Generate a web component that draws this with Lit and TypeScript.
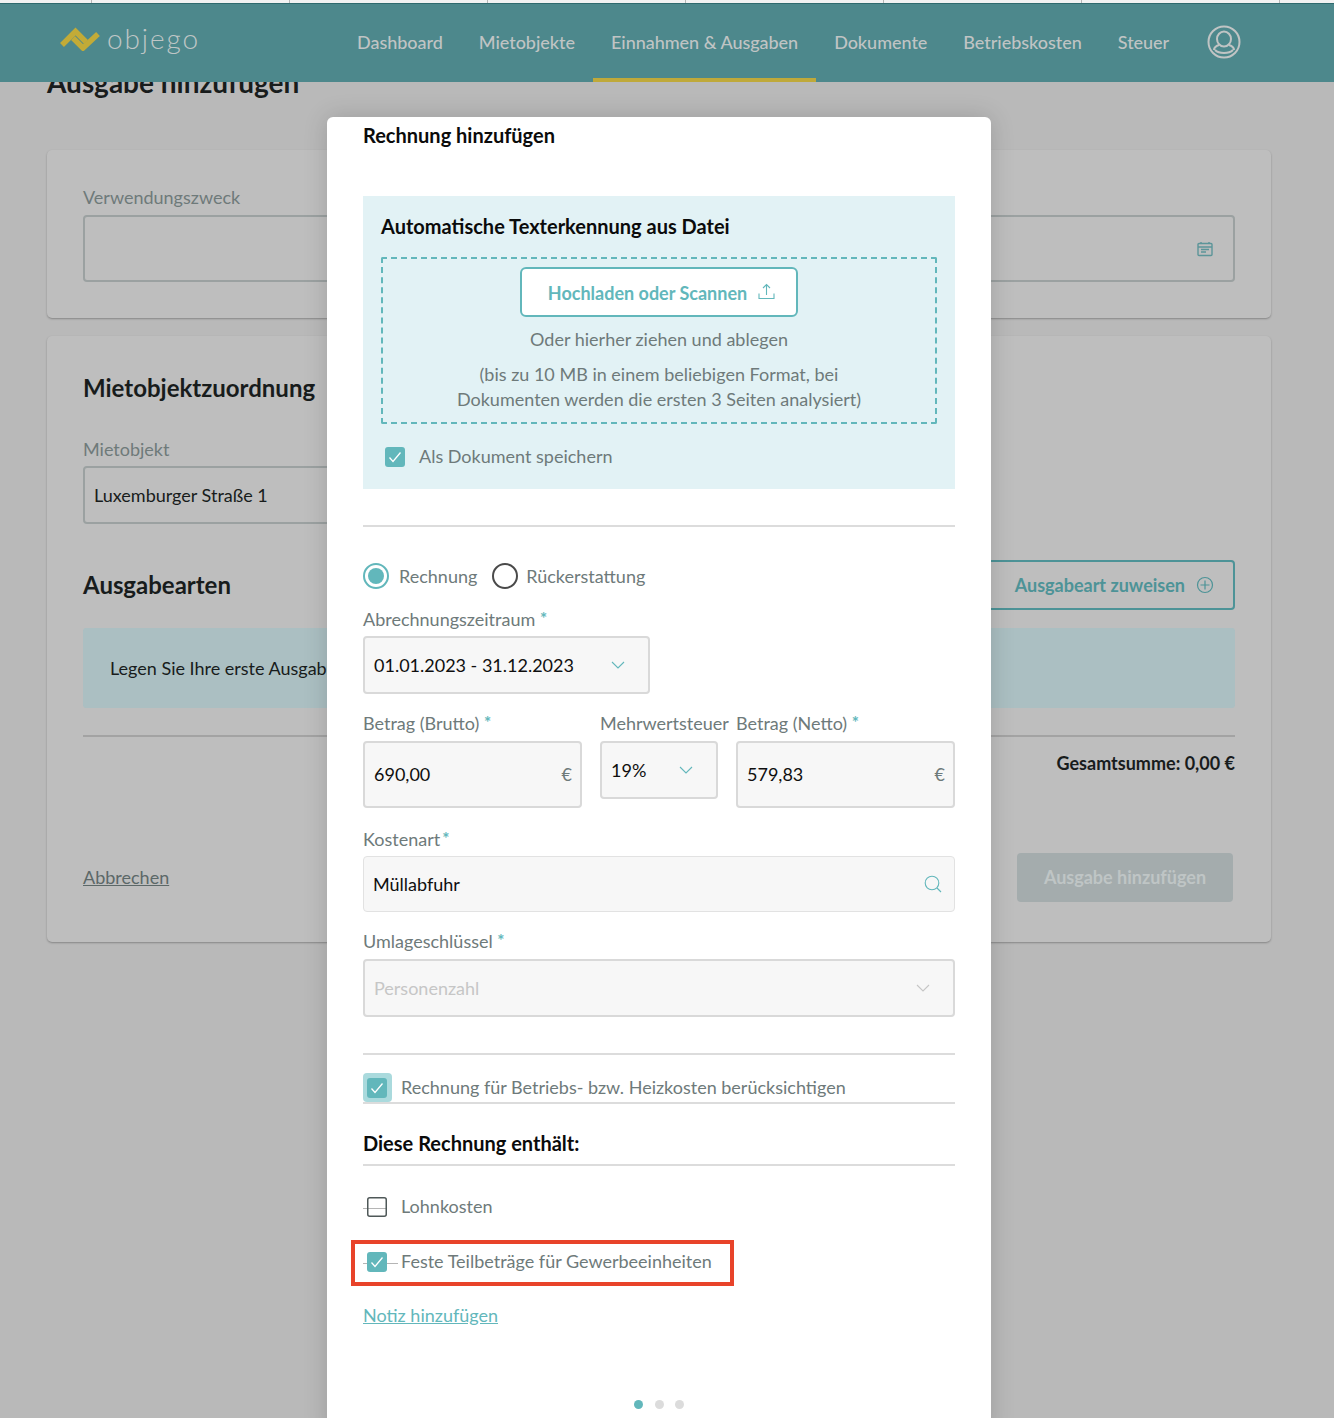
import { LitElement, html, css, svg } from "lit";
import { customElement } from "lit/decorators.js";

const chevron = (color = "#62b7bb") => html`<svg class="chev" width="14" height="8" viewBox="0 0 14 8" fill="none" stroke=${color} stroke-width="1.1"><path d="M1 1l6 6 6-6"/></svg>`;
const check = svg`<path d="M4.5 10.5l3.5 4L15.5 5.5" fill="none" stroke="#fff" stroke-width="1.3"/>`;

@customElement("app-root")
export class AppRoot extends LitElement {
  static styles = css`
    :host { display: block; position: relative; height: 1418px; overflow: hidden; background: #b9b9b9; font-family: Lato, "Liberation Sans", sans-serif; font-size: 18px; color: #6e7a7a; }
    * { box-sizing: border-box; }
    .strip { height: 3px; background: #f2f2f2; display: flex; }
    .strip i { width: 198px; border-right: 1px solid #b5b5b5; }
    .strip i:first-child { width: 92px; }
    header { position: relative; z-index: 2; height: 79px; background: #4d888c; border-top: 1px solid #2f6a6e; display: flex; align-items: stretch; }
    .logo { width: 339px; padding: 19px 0 0 60px; display: flex; gap: 7px; align-items: flex-start; }
    .logo span { font-weight: 300; font-size: 28px; line-height: 34px; letter-spacing: 1.9px; color: #bfc6c6; margin-top: -2px; }
    nav { display: flex; }
    nav a { padding: 0 18px; height: 78px; line-height: 76px; color: #c0c4c4; font-size: 18px; font-weight: 500; letter-spacing: -.03px; }
    nav a.on { border-bottom: 4px solid #bfa93a; }
    .avatar { margin: 21px 0 0 20px; }
    main { padding: 0 63px 0 47px; }
    h1 { margin: -23px 0 0; font-size: 28px; line-height: 46px; color: #181c1c; font-weight: 700; }
    .card { background: #bebebe; border-radius: 5px; box-shadow: 0 1px 2px rgba(0,0,0,.28); padding: 0 36px; }
    .c1 { margin-top: 45px; height: 168px; padding-top: 35px; display: grid; grid-template-columns: 1fr 1fr; gap: 40px; }
    .c2 { margin-top: 18px; height: 606px; padding-top: 36px; }
    .lbl { line-height: 24px; height: 24px; white-space: nowrap; }
    .bginput { margin-top: 6px; height: 67px; border: 2px solid #9ba1a1; border-radius: 4px; display: flex; justify-content: flex-end; align-items: center; padding-right: 20px; }
    h2 { margin: 0; font-size: 24px; line-height: 32px; color: #181c1c; font-weight: 700; }
    .bgsel { margin-top: 5px; width: 360px; height: 58px; border: 2px solid #9ba1a1; border-radius: 4px; padding-left: 9px; line-height: 54px; color: #181c1c; }
    .row { display: flex; justify-content: space-between; align-items: center; }
    .assign { width: 300px; height: 50px; border: 2px solid #4d9397; border-radius: 4px; color: #4d9397; font-weight: 700; display: flex; align-items: center; justify-content: flex-end; padding-right: 19px; gap: 11px; }
    .info { margin-top: 18px; height: 80px; background: #abbfc2; border-radius: 3px; padding-left: 27px; line-height: 81px; color: #181c1c; }
    .bghr { margin-top: 27px; height: 2px; background: #a3a3a3; }
    .sum { text-align: right; margin-top: 13px; line-height: 26px; color: #181c1c; font-weight: 700; }
    .bgbtm { margin-top: 77px; }
    .bgbtm u { color: #5c6868; margin-top: -2px; }
    .disabled { margin-right: 2px; width: 216px; height: 49px; padding-bottom: 2px; border-radius: 4px; background: #a4acad; color: #bfc5c5; font-weight: 700; display: flex; align-items: center; justify-content: center; }

    .modal { position: absolute; z-index: 3; left: 327px; top: 117px; width: 664px; height: 1320px; background: #fff; border-radius: 6px; padding: 0 36px; box-shadow: 0 0 24px rgba(0,0,0,.16); }
    .mtitle, .sub { font-weight: 700; font-size: 20px; color: #0b0b0b; }
    .mtitle { line-height: 36px; height: 36px; }
    .blue { margin-top: 43px; height: 293px; background: #e2f2f5; padding: 17px 18px 0; }
    .sub { line-height: 26px; height: 26px; }
    .dash { margin-top: 18px; height: 167px; border: 2px dashed #62b7bb; border-radius: 2px; padding-top: 8px; display: flex; flex-direction: column; align-items: center; text-align: center; }
    .up { width: 278px; height: 50px; padding: 2px 0 0 5px; background: #fff; border: 2px solid #62b7bb; border-radius: 6px; color: #62b7bb; font-weight: 700; display: flex; align-items: center; justify-content: center; gap: 11px; }
    .up svg { margin-top: -4px; }
    .dash p { margin: 0; line-height: 25px; }
    .dash p.a { margin: 9px 0 10px; line-height: 26px; }
    .cb { width: 20px; height: 20px; flex: none; display: block; }
    .chk { display: flex; align-items: center; }
    .save { margin: 23px 0 0 4px; height: 20px; gap: 14px; }
    .save span { margin-top: -2px; }
    hr { margin: 0; border: 0; height: 2px; background: #dcdcdc; }
    .radios { margin-top: 36px; height: 26px; display: flex; align-items: center; }
    .radio { width: 26px; height: 26px; margin-right: 10px; }
    .radio.off { margin-right: 8px; }
    .radios span { margin-right: 15px; }
    .mlbl { line-height: 24px; height: 24px; white-space: nowrap; }
    .mlbl b { color: #62b7bb; font-weight: 700; font-size: 17px; line-height: 0; vertical-align: 1px; }
    .mlbl b.g { margin-left: 2px; }
    .ctl { background: #f7f7f7; border: 2px solid #d9d9d9; border-radius: 4px; display: flex; align-items: center; justify-content: space-between; color: #0f0f0f; padding: 0 8px 0 9px; }
    .ctl .e { color: #6e7a7a; }
    .period { margin-top: 5px; width: 287px; height: 58px; padding-right: 23px; }
    .three { margin-top: 17px; display: grid; grid-template-columns: 219px 118px 219px; gap: 0 18px; align-items: start; }
    .three .ctl { margin-top: 6px; height: 67px; padding-bottom: 2px; }
    .three .ctl.s { height: 58px; padding: 0 23px 0 9px; }
    .search { margin-top: 5px; height: 56px; border-width: 1px; border-color: #e2e2e2; padding: 0 12px 0 9px; }
    .grey { margin-top: 6px; height: 58px; color: #c6c6c6; padding-right: 23px; }
    .oper { margin-top: 18px; height: 29px; display: flex; align-items: center; gap: 9px; }
    .oper span { margin-top: -2px; }
    .halo { width: 29px; height: 29px; padding-left: 4px; background: #aadadd; border-radius: 4px; display: flex; align-items: center; flex: none; }
    .ln { position: relative; height: 24px; margin-top: 29px; padding-left: 4px; gap: 14px; }
    .ln span { margin-top: -2px; }
    .ln::before { content: ""; position: absolute; left: 0; top: 13px; height: 1px; background: #b5b5b5; }
    .ln.l1::before { width: 23px; }
    .ln.l2 { margin-top: 31px; }
    .ln.l2::before { width: 35px; }
    .ln .cb { position: relative; }
    .note { display: block; margin-top: 29px; line-height: 24px; color: #62b7bb; text-decoration: underline; }
    .dots { margin-top: 73px; display: flex; justify-content: center; gap: 11px; }
    .dots i { width: 9px; height: 9px; border-radius: 50%; background: #dcdcdc; }
    .dots i.on { background: #62b7bb; margin-left: -1px; margin-right: 1px; }
    .red { position: absolute; left: 24px; top: 1123px; width: 383px; height: 46px; border: 4px solid #e8432a; }
  `;

  render() {
    const cb = html`<svg class="cb" viewBox="0 0 20 20"><rect width="20" height="20" rx="3" fill="#62b7bb"/>${check}</svg>`;
    return html`
      <div class="strip"><i></i><i></i><i></i><i></i><i></i><i></i><i></i></div>
      <header>
        <div class="logo">
          <svg width="40" height="28" viewBox="0 0 40 28" fill="none" stroke="#c2ab37" stroke-width="5.5"><path d="M2 22L15.5 8.5 26 19"/><path d="M13 15l10 10 15-14"/></svg>
          <span>objego</span>
        </div>
        <nav>
          <a>Dashboard</a><a>Mietobjekte</a><a class="on">Einnahmen &amp; Ausgaben</a><a>Dokumente</a><a>Betriebskosten</a><a>Steuer</a>
        </nav>
        <svg class="avatar" width="34" height="34" viewBox="0 0 34 34" fill="none" stroke="#c0c4c4" stroke-width="2"><circle cx="17" cy="17" r="15.5"/><ellipse cx="17" cy="14" rx="7" ry="7.5"/><path d="M12 20c-3 1-5 3-5 5M22 20c3 1 5 3 5 5M8 25c4 4 14 4 18 0"/></svg>
      </header>
      <main>
        <h1>Ausgabe hinzufügen</h1>
        <section class="card c1">
          <div><div class="lbl">Verwendungszweck</div><div class="bginput"></div></div>
          <div><div class="lbl">&nbsp;</div><div class="bginput">
            <svg width="16" height="16" viewBox="0 0 16 16" fill="none" stroke="#5c9599" stroke-width="1.4"><rect x="1" y="2.5" width="14" height="12" rx="1"/><path d="M1 6h14M4 1v2M12 1v2M4 8.5h8M4 11h5"/></svg>
          </div></div>
        </section>
        <section class="card c2">
          <h2>Mietobjektzuordnung</h2>
          <div class="lbl" style="margin-top:33px">Mietobjekt</div>
          <div class="bgsel">Luxemburger Straße 1</div>
          <div class="row" style="margin-top:36px">
            <h2>Ausgabearten</h2>
            <div class="assign">Ausgabeart zuweisen
              <svg width="18" height="18" viewBox="0 0 18 18" fill="none" stroke="#4d9397" stroke-width="1.2"><circle cx="9" cy="9" r="7.5"/><path d="M9 4.5v9M4.5 9h9"/></svg>
            </div>
          </div>
          <div class="info">Legen Sie Ihre erste Ausgabeart an</div>
          <div class="bghr"></div>
          <div class="sum">Gesamtsumme: 0,00 €</div>
          <div class="row bgbtm"><u>Abbrechen</u><div class="disabled">Ausgabe hinzufügen</div></div>
        </section>
      </main>

      <div class="modal">
        <div class="mtitle">Rechnung hinzufügen</div>
        <div class="blue">
          <div class="sub">Automatische Texterkennung aus Datei</div>
          <div class="dash">
            <div class="up">Hochladen oder Scannen
              <svg width="17" height="17" viewBox="0 0 17 17" fill="none" stroke="#62b7bb" stroke-width="1.1"><path d="M8.5 12V1.5M5 5l3.5-3.5L12 5M1 10.5v5h15v-5"/></svg>
            </div>
            <p class="a">Oder hierher ziehen und ablegen</p>
            <p>(bis zu 10 MB in einem beliebigen Format, bei<br>Dokumenten werden die ersten 3 Seiten analysiert)</p>
          </div>
          <div class="chk save">${cb}<span>Als Dokument speichern</span></div>
        </div>
        <hr style="margin-top:36px">
        <div class="radios">
          <svg class="radio" viewBox="0 0 26 26"><circle cx="13" cy="13" r="12" fill="#fff" stroke="#62b7bb" stroke-width="2"/><circle cx="13" cy="13" r="8" fill="#62b7bb"/></svg>
          <span>Rechnung</span>
          <svg class="radio off" viewBox="0 0 26 26"><circle cx="13" cy="13" r="12" fill="#fff" stroke="#4a4a4a" stroke-width="2"/></svg>
          <span>Rückerstattung</span>
        </div>
        <div class="mlbl" style="margin-top:18px">Abrechnungszeitraum <b>*</b></div>
        <div class="ctl period">01.01.2023 - 31.12.2023 ${chevron()}</div>
        <div class="three">
          <div><div class="mlbl">Betrag (Brutto) <b>*</b></div><div class="ctl"><span>690,00</span><span class="e">€</span></div></div>
          <div><div class="mlbl">Mehrwertsteuer</div><div class="ctl s"><span>19%</span>${chevron()}</div></div>
          <div><div class="mlbl">Betrag (Netto) <b>*</b></div><div class="ctl"><span>579,83</span><span class="e">€</span></div></div>
        </div>
        <div class="mlbl" style="margin-top:19px">Kostenart<b class="g">*</b></div>
        <div class="ctl search"><span>Müllabfuhr</span>
          <svg width="18" height="18" viewBox="0 0 18 18" fill="none" stroke="#62b7bb" stroke-width="1.1"><circle cx="8" cy="8" r="6.8"/><path d="M13 13l4 4"/></svg>
        </div>
        <div class="mlbl" style="margin-top:17px">Umlageschlüssel <b>*</b></div>
        <div class="ctl grey">Personenzahl ${chevron("#c6c6c6")}</div>
        <hr style="margin-top:36px">
        <div class="oper"><div class="halo">${cb}</div><span>Rechnung für Betriebs- bzw. Heizkosten berücksichtigen</span></div>
        <hr>
        <div class="sub" style="margin-top:26px">Diese Rechnung enthält:</div>
        <hr style="margin-top:8px">
        <div class="chk ln l1">
          <svg class="cb" viewBox="0 0 20 20"><rect x=".75" y=".75" width="18.5" height="18.5" rx="2" fill="none" stroke="#4f5858" stroke-width="1.5"/></svg>
          <span>Lohnkosten</span>
        </div>
        <div class="chk ln l2">${cb}<span>Feste Teilbeträge für Gewerbeeinheiten</span></div>
        <a class="note">Notiz hinzufügen</a>
        <div class="dots"><i class="on"></i><i></i><i></i></div>
        <div class="red"></div>
      </div>
    `;
  }
}
